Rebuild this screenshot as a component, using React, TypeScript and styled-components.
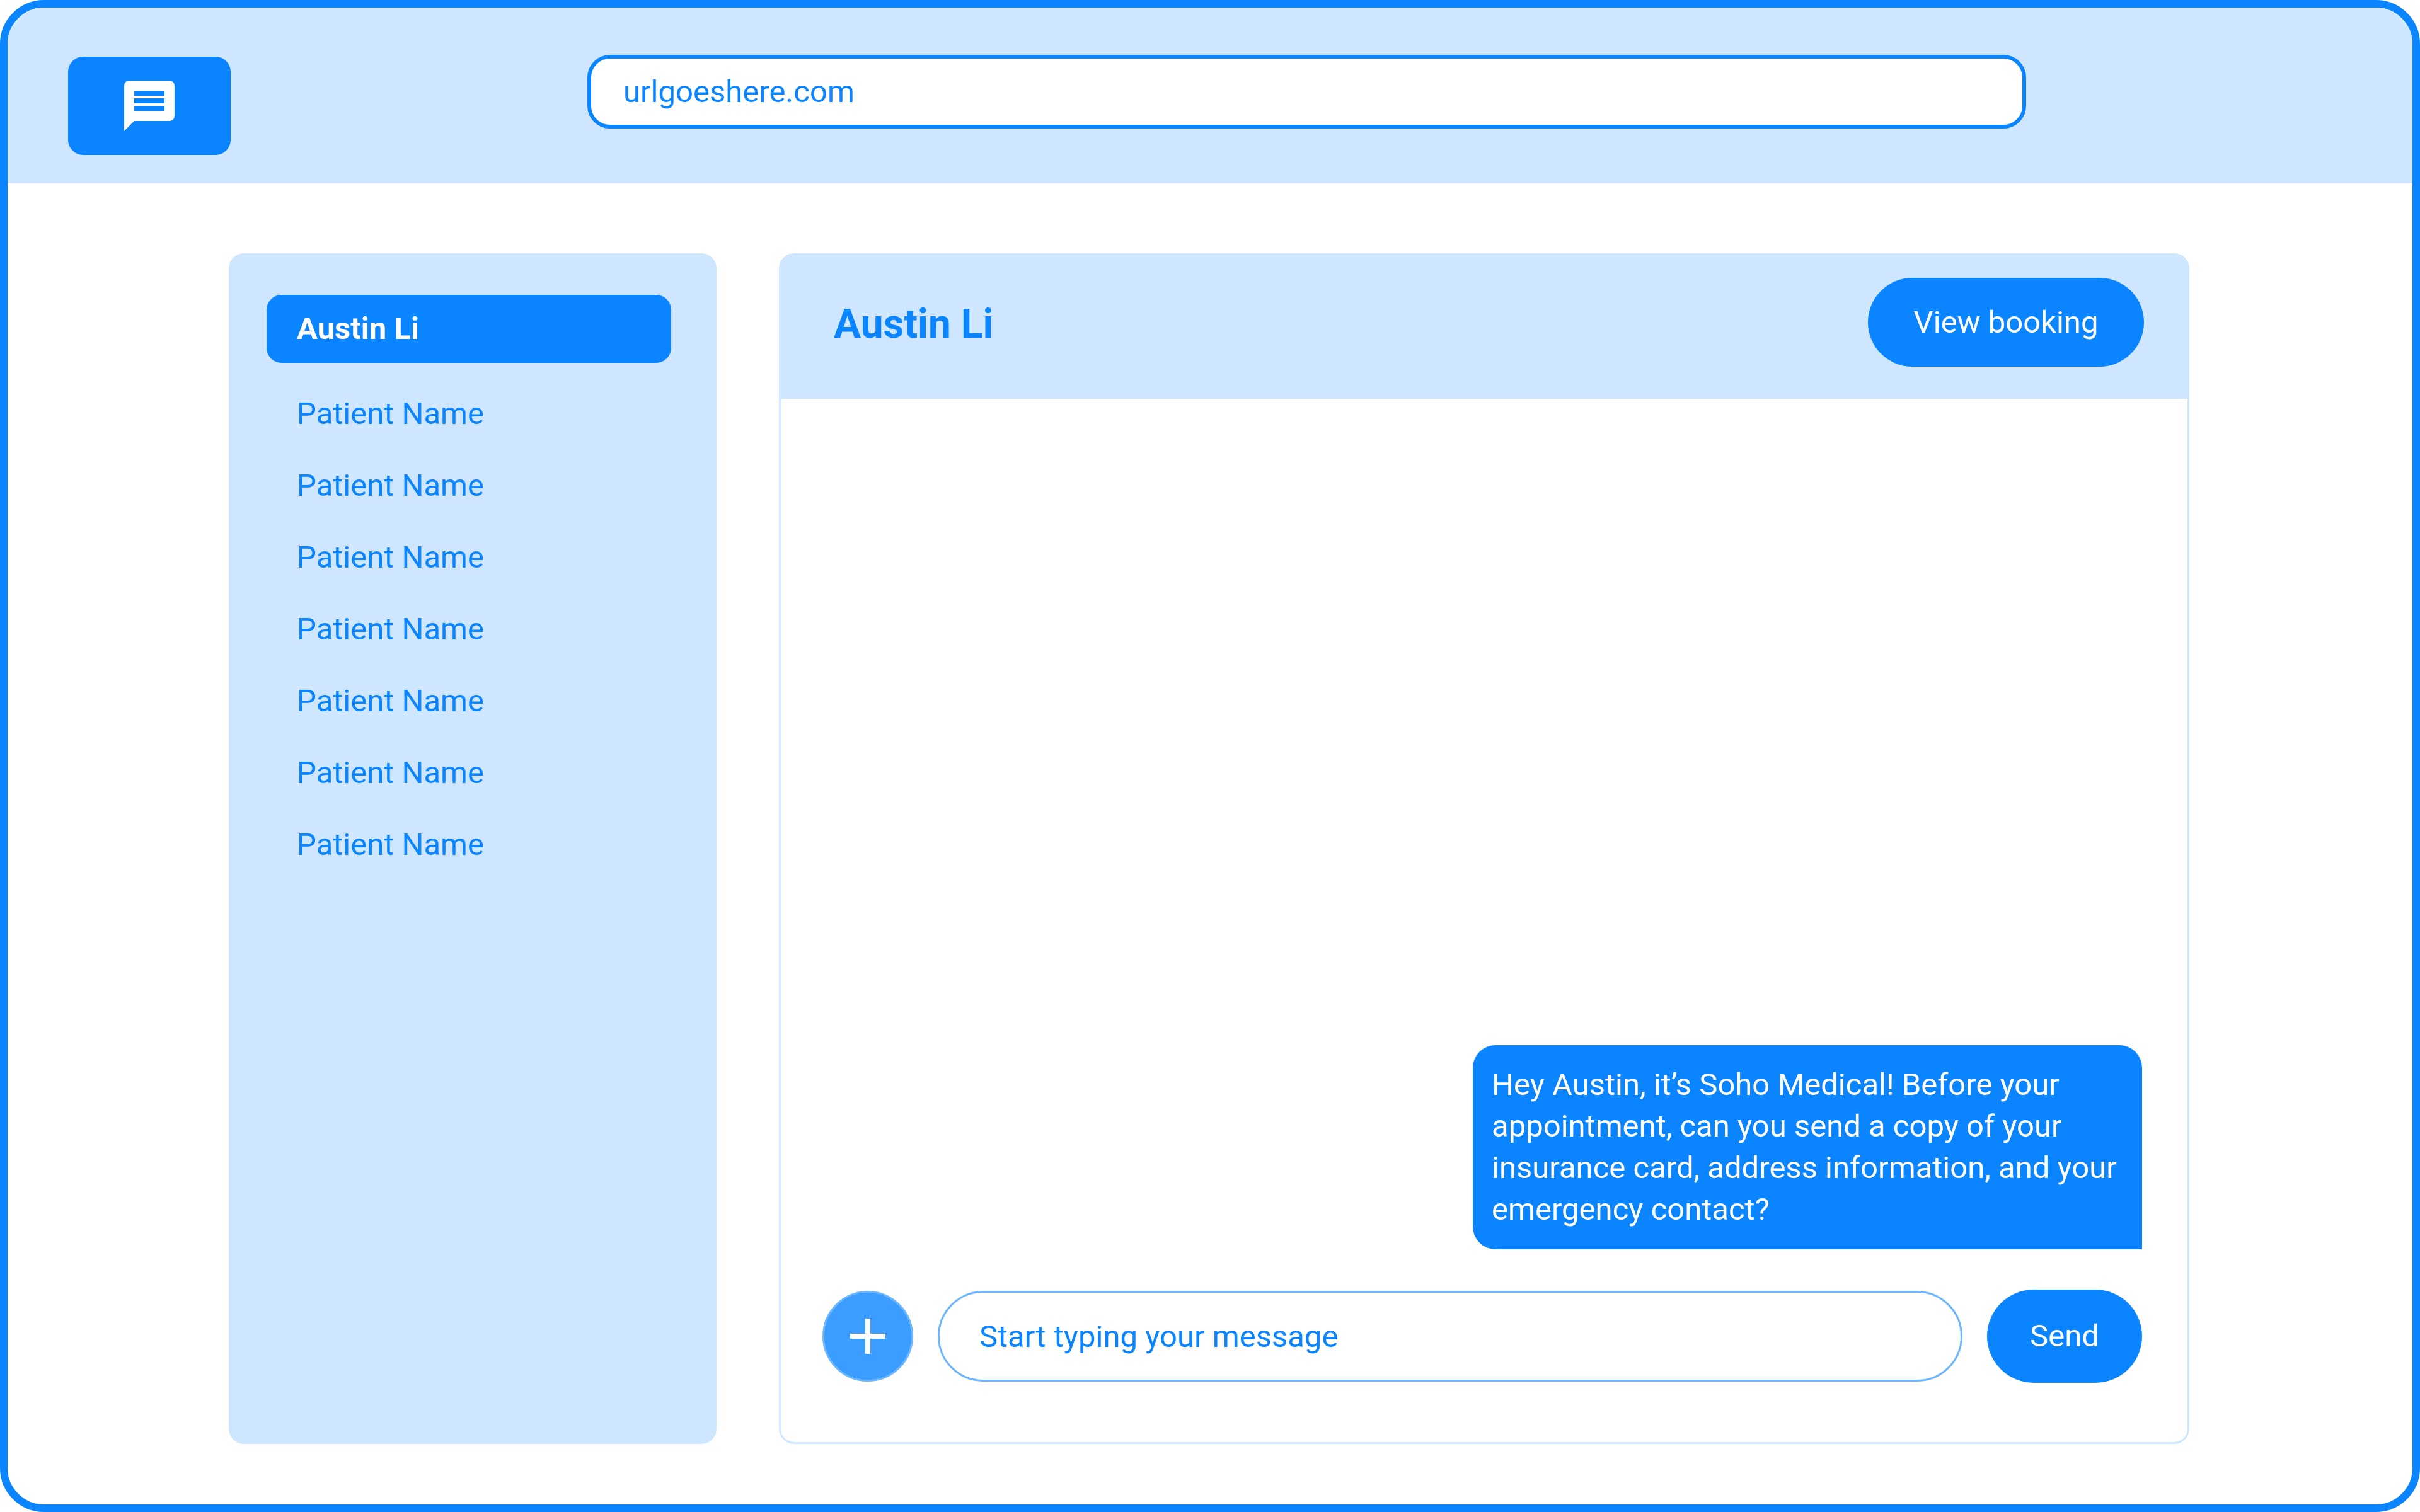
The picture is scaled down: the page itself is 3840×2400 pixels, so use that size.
import React, { useState } from "react";
import styled, { createGlobalStyle } from "styled-components";

const color = {
  primary: "#0a84ff",
  strong: "#3b9dff",
  line: "#6cb5ff",
  tint: "#cee6ff",
  white: "#ffffff",
};

const GlobalStyle = createGlobalStyle`
  *, *::before, *::after { box-sizing: border-box; }
  body {
    margin: 0;
    background: ${color.white};
    font-family: Roboto, "Liberation Sans", sans-serif;
    font-size: 49px;
    line-height: 66px;
  }
  button, input {
    margin: 0;
    font: inherit;
  }
  button { cursor: pointer; }
`;

const Window = styled.div`
  display: flex;
  flex-direction: column;
  min-height: 100vh;
  border: 12px solid ${color.primary};
  border-radius: 70px;
  background: ${color.white};
  overflow: hidden;
`;

const TopBar = styled.header`
  display: flex;
  align-items: flex-start;
  background: ${color.tint};
`;

const Brand = styled.div`
  padding: 78px 0 45px 96px;
`;

const BrandButton = styled.button`
  display: flex;
  align-items: center;
  justify-content: center;
  width: 258px;
  height: 156px;
  padding: 0;
  border: 0;
  border-radius: 24px;
  background: ${color.primary};
  color: ${color.white};
`;

const Address = styled.form`
  display: flex;
  flex: 1;
  padding: 75px 613px 0 566px;
`;

const AddressInput = styled.input`
  flex: 1;
  min-width: 0;
  height: 117px;
  padding: 0 51px;
  border: 6px solid ${color.primary};
  border-radius: 36px;
  outline: none;
  background: ${color.white};
  color: ${color.primary};
`;

const Workspace = styled.main`
  display: flex;
  flex: 1;
  gap: 99px;
  padding: 111px 354px 96px 351px;
`;

const Sidebar = styled.nav`
  flex: 0 0 774px;
  padding: 66px 72px 66px 60px;
  border-radius: 24px;
  background: ${color.tint};
`;

const PatientList = styled.ul`
  display: flex;
  flex-direction: column;
  gap: 48px;
  margin: 0;
  padding: 0;
  list-style: none;
`;

const PatientButton = styled.button<{ $active: boolean }>`
  display: block;
  width: 100%;
  padding: ${(p) => (p.$active ? "21px 48px" : "0 48px")};
  border: 0;
  border-radius: 24px;
  background: ${(p) => (p.$active ? color.primary : "transparent")};
  color: ${(p) => (p.$active ? color.white : color.primary)};
  font-weight: ${(p) => (p.$active ? 700 : 400)};
  text-align: left;
`;

const Chat = styled.section`
  display: flex;
  flex: 1;
  flex-direction: column;
  min-width: 0;
  border: 3px solid ${color.tint};
  border-radius: 24px;
  overflow: hidden;
`;

const ChatHeader = styled.div`
  display: flex;
  align-items: flex-start;
  justify-content: space-between;
  padding: 36px 69px 44px 84px;
  background: ${color.tint};
`;

const ChatTitle = styled.h1`
  margin: 0;
  color: ${color.primary};
  font-size: 64px;
  font-weight: 700;
  line-height: 148px;
`;

const PillButton = styled.button<{ $width: number; $height: number }>`
  flex: none;
  width: ${(p) => p.$width}px;
  height: ${(p) => p.$height}px;
  padding: 0;
  border: 0;
  border-radius: 74px;
  background: ${color.primary};
  color: ${color.white};
`;

const Thread = styled.div`
  display: flex;
  flex: 1;
  flex-direction: column;
  align-items: flex-end;
  justify-content: flex-end;
  padding: 0 72px 64px;
`;

const Message = styled.p`
  max-width: 1062px;
  margin: 0;
  padding: 30px;
  border-radius: 36px 36px 0 36px;
  background: ${color.primary};
  color: ${color.white};
`;

const Composer = styled.form`
  display: flex;
  align-items: center;
  gap: 39px;
  padding: 0 72px 94px 66px;
`;

const AttachButton = styled.button`
  display: flex;
  flex: none;
  align-items: center;
  justify-content: center;
  width: 144px;
  height: 144px;
  padding: 0;
  border: 3px solid ${color.line};
  border-radius: 50%;
  background: ${color.strong};
  color: ${color.white};
`;

const MessageInput = styled.input`
  flex: 1;
  min-width: 0;
  height: 144px;
  padding: 0 63px;
  border: 3px solid ${color.line};
  border-radius: 72px;
  outline: none;
  background: ${color.white};
  color: ${color.primary};

  &::placeholder {
    color: ${color.primary};
    opacity: 1;
  }
`;

const Glyph = styled.svg`
  display: block;
  width: 96px;
  height: 96px;
  fill: currentColor;
`;

const patients = [
  "Austin Li",
  "Patient Name",
  "Patient Name",
  "Patient Name",
  "Patient Name",
  "Patient Name",
  "Patient Name",
  "Patient Name",
];

export default function App() {
  const [selected, setSelected] = useState(0);
  const [url, setUrl] = useState("urlgoeshere.com");
  const [draft, setDraft] = useState("");

  return (
    <>
      <GlobalStyle />
      <Window>
        <TopBar>
          <Brand>
            <BrandButton type="button" aria-label="Messages">
              <Glyph viewBox="0 0 24 24" aria-hidden="true">
                <path d="M20 2H4c-1.1 0-2 .9-2 2v18l4-4h14c1.1 0 2-.9 2-2V4c0-1.1-.9-2-2-2zm-2 12H6v-2h12v2zm0-3H6V9h12v2zm0-3H6V6h12v2z" />
              </Glyph>
            </BrandButton>
          </Brand>
          <Address onSubmit={(e) => e.preventDefault()}>
            <AddressInput
              type="text"
              aria-label="Address"
              value={url}
              onChange={(e) => setUrl(e.target.value)}
            />
          </Address>
        </TopBar>

        <Workspace>
          <Sidebar aria-label="Patients">
            <PatientList>
              {patients.map((name, i) => (
                <li key={i}>
                  <PatientButton
                    type="button"
                    $active={i === selected}
                    onClick={() => setSelected(i)}
                  >
                    {name}
                  </PatientButton>
                </li>
              ))}
            </PatientList>
          </Sidebar>

          <Chat>
            <ChatHeader>
              <ChatTitle>{patients[selected]}</ChatTitle>
              <PillButton type="button" $width={438} $height={141}>
                View booking
              </PillButton>
            </ChatHeader>
            <Thread>
              <Message>
                Hey Austin, it’s Soho Medical! Before your appointment, can you
                send a copy of your insurance card, address information, and
                your emergency contact?
              </Message>
            </Thread>
            <Composer onSubmit={(e) => e.preventDefault()}>
              <AttachButton type="button" aria-label="Add attachment">
                <Glyph viewBox="0 0 24 24" aria-hidden="true">
                  <path d="M19 13h-6v6h-2v-6H5v-2h6V5h2v6h6v2z" />
                </Glyph>
              </AttachButton>
              <MessageInput
                type="text"
                aria-label="Message"
                placeholder="Start typing your message"
                value={draft}
                onChange={(e) => setDraft(e.target.value)}
              />
              <PillButton type="submit" $width={246} $height={148}>
                Send
              </PillButton>
            </Composer>
          </Chat>
        </Workspace>
      </Window>
    </>
  );
}
